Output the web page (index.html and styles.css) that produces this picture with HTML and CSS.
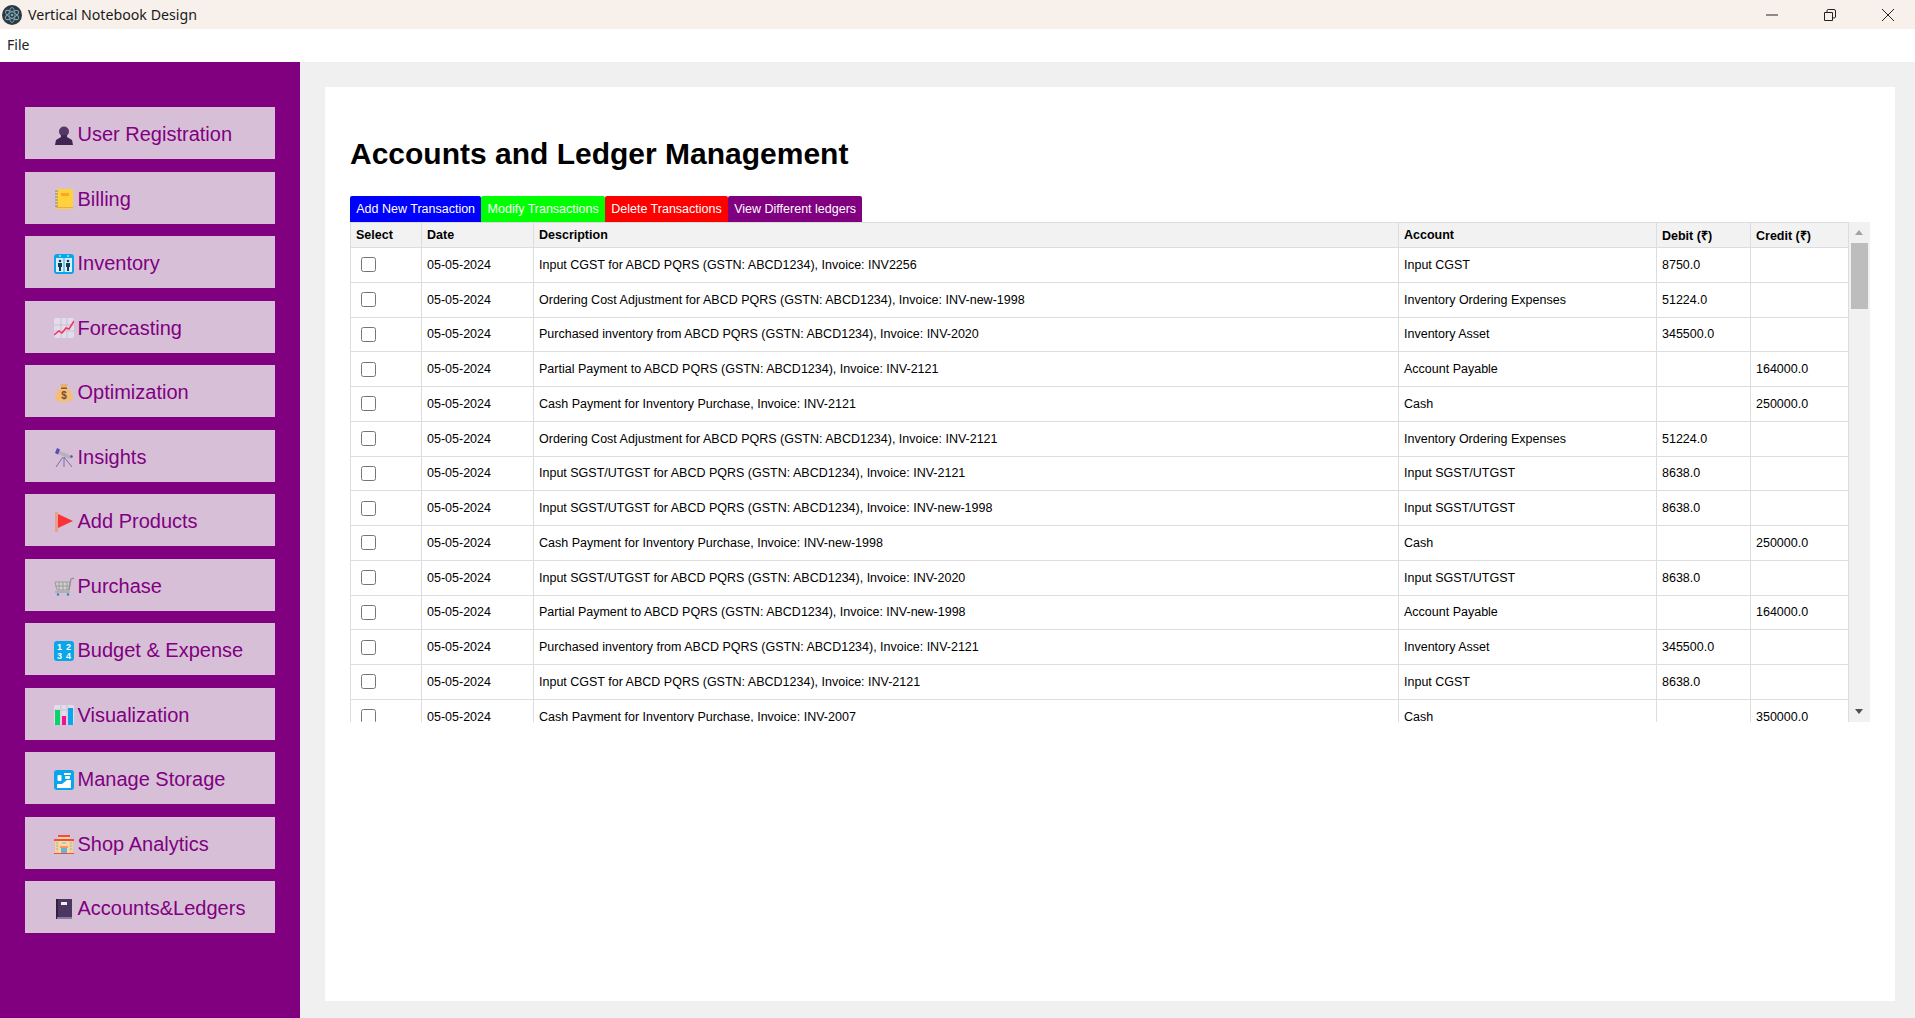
FILE: index.html
```html
<!DOCTYPE html>
<html lang="en">
<head>
  <meta charset="UTF-8" />
  <title>Vertical Notebook Design</title>
  <link rel="stylesheet" href="styles.css">
</head>
<body>

  <!-- Window title bar -->
  <div class="titlebar">
    <div class="titlebar-left">
      <svg class="app-icon" viewBox="0 0 20 20">
        <circle cx="10" cy="10" r="10" fill="#2b3a42"/>
        <g fill="none" stroke="#7fa8b5" stroke-width="0.900">
          <ellipse cx="10" cy="10" rx="7.5" ry="3" transform="rotate(30 10 10)"/>
          <ellipse cx="10" cy="10" rx="7.5" ry="3" transform="rotate(90 10 10)"/>
          <ellipse cx="10" cy="10" rx="7.5" ry="3" transform="rotate(150 10 10)"/>
        </g>
        <circle cx="10" cy="10" r="1.3" fill="#7fa8b5"/>
      </svg>
      <span>Vertical Notebook Design</span>
    </div>
    <div class="window-controls">
      <svg viewBox="0 0 14 14"><path d="M1 7h12" stroke="#222" fill="none"/></svg>
      <svg viewBox="0 0 14 14"><path d="M1.5 4.500h8v8h-8zM4 4.500V2.800Q4 1.500 5.300 1.500H11Q12.500 1.500 12.500 3V9Q12.500 10 10 10" stroke="#222" fill="none"/></svg>
      <svg viewBox="0 0 14 14"><path d="M1 1l12 12M13 1L1 13" stroke="#222" fill="none"/></svg>
    </div>
  </div>

  <!-- Menu -->
  <div class="menubar">File</div>

  <div class="app">
    <!-- Sidebar -->
    <nav class="sidebar">
      <button class="nav-btn">
        <svg viewBox="0 0 20 20"><circle cx="10" cy="6.500" r="5" fill="#553768"/><path d="M7 10h6v2l5 3 1 5H1l1-5 5-3z" fill="#3f2654"/></svg>
        User Registration
      </button>
      <button class="nav-btn">
        <svg viewBox="0 0 20 20"><rect x="2" y="0" width="17" height="20" fill="#ffd23c"/><rect x="2" y="18" width="17" height="1" fill="#e8a951"/><rect x="7" y="4" width="8" height="3" fill="#f9a825"/><path d="M1 2h3M1 5h3M1 8h3M1 11h3M1 14h3M1 17h3" stroke="#9a9a9a" stroke-width="1.500"/></svg>
        Billing
      </button>
      <button class="nav-btn">
        <svg viewBox="0 0 20 20"><rect width="20" height="20" rx="3" fill="#0ba5ea"/><rect x="2" y="4" width="16" height="14" fill="#d9f0fb"/><path d="M10 4v14" stroke="#0ba5ea"/><g fill="#173a4d"><circle cx="6" cy="7" r="1.300"/><circle cx="14" cy="7" r="1.300"/><path d="M4 9h4v4H7v4H5v-4H4zM12 9h4v4h-1v4h-2v-4h-1z"/></g><path d="M5 2h2M13 2h2" stroke="#fff"/></svg>
        Inventory
      </button>
      <button class="nav-btn">
        <svg viewBox="0 0 20 20"><rect width="20" height="20" rx="2" fill="#e3dcea"/><path d="M7 0v20M13 0v20M0 7h20M0 13h20" stroke="#c9bfd2"/><path d="M0 17l5-4 3 2 4-5 3 1 5-8" fill="none" stroke="#f0325f" stroke-width="1.500"/></svg>
        Forecasting
      </button>
      <button class="nav-btn">
        <svg viewBox="0 0 20 20"><path d="M6 1h8l-2 4h-4z" fill="#e8b26c"/><path d="M7 5h6c4 2 6 6 6 9 0 4-3 5-9 5s-9-1-9-5c0-3 2-7 6-9z" fill="#f3bf78"/><rect x="7" y="4.500" width="6" height="1.500" fill="#8a5a3a"/><text x="10" y="16" class="bag-sign">$</text></svg>
        Optimization
      </button>
      <button class="nav-btn">
        <svg viewBox="0 0 20 20"><path d="M3 3l15 6-2 3L2 6z" fill="#b4b0bc"/><path d="M3 1l3 1.500-2 5L1 6z" fill="#5a4fb0"/><path d="M17 8l2 1-1 2-2-1z" fill="#5a4fb0"/><path d="M9 10L2 20M10 10v10M10 10l8 10" stroke="#7a6ba8" fill="none"/></svg>
        Insights
      </button>
      <button class="nav-btn">
        <svg viewBox="0 0 20 20"><rect x="1" y="0" width="3" height="20" fill="#e8a090"/><path d="M4 2l15 7-15 7z" fill="#fb3138"/></svg>
        Add Products
      </button>
      <button class="nav-btn">
        <svg viewBox="0 0 20 20"><path d="M1 6h15l-1 8H3z" fill="#cfcfcf"/><path d="M1 6h15l-1 8H3zM5 6v8M9 6v8M13 6v8M1 10h15" fill="none" stroke="#9b9b9b"/><path d="M15 14l2-11 3-1" fill="none" stroke="#8d8d8d" stroke-width="1.200"/><path d="M1 16h15" stroke="#b0b0b0" stroke-width="2"/><circle cx="4" cy="18.500" r="1.300" fill="#2b8cc4"/><circle cx="14" cy="18.500" r="1.300" fill="#2b8cc4"/></svg>
        Purchase
      </button>
      <button class="nav-btn">
        <svg viewBox="0 0 20 20"><rect width="20" height="20" rx="3" fill="#0ba5ea"/><text x="5.500" y="8.500" class="key-num">1</text><text x="14.500" y="8.500" class="key-num">2</text><text x="5.500" y="18" class="key-num">3</text><text x="14.500" y="18" class="key-num">4</text></svg>
        Budget &amp; Expense
      </button>
      <button class="nav-btn">
        <svg viewBox="0 0 20 20"><rect width="20" height="20" rx="2" fill="#e3dcea"/><path d="M7 0v20M13 0v20M0 5h20" stroke="#cdc3d6"/><rect x="1" y="5" width="5" height="15" fill="#0bd36b"/><rect x="8" y="11" width="4" height="9" fill="#f0148c"/><rect x="14" y="3" width="5" height="17" fill="#0ba5ea"/></svg>
        Visualization
      </button>
      <button class="nav-btn">
        <svg viewBox="0 0 20 20"><rect width="20" height="20" rx="3" fill="#0ba5ea"/><rect x="3.500" y="5" width="4" height="6" rx="1" fill="#fff"/><rect x="10" y="3" width="7" height="2" fill="#fff"/><rect x="11" y="6" width="5" height="3" rx="1" fill="#fff"/><path d="M3 18v-4h5l5-4h4v8z" fill="#fff"/></svg>
        Manage Storage
      </button>
      <button class="nav-btn">
        <svg viewBox="0 0 20 20"><rect x="1" y="6" width="18" height="14" fill="#fbd08a"/><rect x="5" y="2" width="10" height="18" fill="#fdd99b"/><path d="M0 6h20M4 2h12" stroke="#f24c3d" stroke-width="2"/><path d="M0 20h20" stroke="#f24c3d" stroke-width="2"/><rect x="7" y="14" width="6" height="5" fill="#5fb4e0"/><path d="M6 13h8" stroke="#f24c3d"/><path d="M2 9h2M2 12h2M2 15h2M16 9h2M16 12h2M16 15h2M8 9h4" stroke="#8fc7e0" stroke-width="1.500"/></svg>
        Shop Analytics
      </button>
      <button class="nav-btn">
        <svg viewBox="0 0 20 20"><rect x="2" y="0" width="16" height="18" fill="#4c3760"/><rect x="2" y="0" width="2" height="20" fill="#2f1f40"/><rect x="3" y="18" width="15" height="2" fill="#8c7aa0"/><rect x="7" y="3" width="6" height="3" fill="#eee"/></svg>
        Accounts&amp;Ledgers
      </button>
    </nav>

    <!-- Main content -->
    <main class="main">
      <div class="card">
        <h1>Accounts and Ledger Management</h1>

        <div class="tabs">
          <button class="tab tab-add">Add New Transaction</button>
          <button class="tab tab-modify">Modify Transactions</button>
          <button class="tab tab-delete">Delete Transactions</button>
          <button class="tab tab-view">View Different ledgers</button>
        </div>

        <div class="table-wrap">
          <div class="table-clip">
            <table>
              <thead>
                <tr>
                  <th class="col-select">Select</th>
                  <th class="col-date">Date</th>
                  <th class="col-desc">Description</th>
                  <th class="col-account">Account</th>
                  <th class="col-debit">Debit (₹)</th>
                  <th class="col-credit">Credit (₹)</th>
                </tr>
              </thead>
              <tbody>
                <tr><td class="cell-check"><input type="checkbox"></td><td>05-05-2024</td><td>Input CGST for ABCD PQRS (GSTN: ABCD1234), Invoice: INV2256</td><td>Input CGST</td><td>8750.0</td><td></td></tr>
                <tr><td class="cell-check"><input type="checkbox"></td><td>05-05-2024</td><td>Ordering Cost Adjustment for ABCD PQRS (GSTN: ABCD1234), Invoice: INV-new-1998</td><td>Inventory Ordering Expenses</td><td>51224.0</td><td></td></tr>
                <tr><td class="cell-check"><input type="checkbox"></td><td>05-05-2024</td><td>Purchased inventory from ABCD PQRS (GSTN: ABCD1234), Invoice: INV-2020</td><td>Inventory Asset</td><td>345500.0</td><td></td></tr>
                <tr><td class="cell-check"><input type="checkbox"></td><td>05-05-2024</td><td>Partial Payment to ABCD PQRS (GSTN: ABCD1234), Invoice: INV-2121</td><td>Account Payable</td><td></td><td>164000.0</td></tr>
                <tr><td class="cell-check"><input type="checkbox"></td><td>05-05-2024</td><td>Cash Payment for Inventory Purchase, Invoice: INV-2121</td><td>Cash</td><td></td><td>250000.0</td></tr>
                <tr><td class="cell-check"><input type="checkbox"></td><td>05-05-2024</td><td>Ordering Cost Adjustment for ABCD PQRS (GSTN: ABCD1234), Invoice: INV-2121</td><td>Inventory Ordering Expenses</td><td>51224.0</td><td></td></tr>
                <tr><td class="cell-check"><input type="checkbox"></td><td>05-05-2024</td><td>Input SGST/UTGST for ABCD PQRS (GSTN: ABCD1234), Invoice: INV-2121</td><td>Input SGST/UTGST</td><td>8638.0</td><td></td></tr>
                <tr><td class="cell-check"><input type="checkbox"></td><td>05-05-2024</td><td>Input SGST/UTGST for ABCD PQRS (GSTN: ABCD1234), Invoice: INV-new-1998</td><td>Input SGST/UTGST</td><td>8638.0</td><td></td></tr>
                <tr><td class="cell-check"><input type="checkbox"></td><td>05-05-2024</td><td>Cash Payment for Inventory Purchase, Invoice: INV-new-1998</td><td>Cash</td><td></td><td>250000.0</td></tr>
                <tr><td class="cell-check"><input type="checkbox"></td><td>05-05-2024</td><td>Input SGST/UTGST for ABCD PQRS (GSTN: ABCD1234), Invoice: INV-2020</td><td>Input SGST/UTGST</td><td>8638.0</td><td></td></tr>
                <tr><td class="cell-check"><input type="checkbox"></td><td>05-05-2024</td><td>Partial Payment to ABCD PQRS (GSTN: ABCD1234), Invoice: INV-new-1998</td><td>Account Payable</td><td></td><td>164000.0</td></tr>
                <tr><td class="cell-check"><input type="checkbox"></td><td>05-05-2024</td><td>Purchased inventory from ABCD PQRS (GSTN: ABCD1234), Invoice: INV-2121</td><td>Inventory Asset</td><td>345500.0</td><td></td></tr>
                <tr><td class="cell-check"><input type="checkbox"></td><td>05-05-2024</td><td>Input CGST for ABCD PQRS (GSTN: ABCD1234), Invoice: INV-2121</td><td>Input CGST</td><td>8638.0</td><td></td></tr>
                <tr><td class="cell-check"><input type="checkbox"></td><td>05-05-2024</td><td>Cash Payment for Inventory Purchase, Invoice: INV-2007</td><td>Cash</td><td></td><td>350000.0</td></tr>
              </tbody>
            </table>
          </div>
          <div class="scrollbar">
            <div class="arrow arrow-up"></div>
            <div class="track"><div class="thumb"></div></div>
            <div class="arrow arrow-down"></div>
          </div>
        </div>
      </div>
    </main>
  </div>

</body>
</html>
```

FILE: styles.css
```css
* {
  box-sizing: border-box;
  margin: 0;
  padding: 0;
}

html, body {
  height: 100%;
  overflow: hidden;
}

body {
  display: flex;
  flex-direction: column;
  font-family: 'Liberation Sans', Arial, sans-serif;
  background: #f0f0f0;
}

/* Title bar */
.titlebar {
  height: 29px;
  flex: none;
  background: #f8f0ea;
  display: flex;
  justify-content: space-between;
  align-items: center;
  padding: 0 20px 0 2px;
  font-family: 'Noto Sans', sans-serif;
  font-size: 14.2px;
  color: #1a1a1a;
}

.titlebar-left {
  display: flex;
  align-items: center;
  gap: 6px;
}

.app-icon {
  width: 20px;
  height: 20px;
}

.window-controls {
  display: flex;
  gap: 44px;
}

.window-controls svg {
  width: 14px;
  height: 14px;
  display: block;
}

.menubar {
  height: 33px;
  flex: none;
  background: #fff;
  padding: 6px 7px 0;
  font-family: 'Noto Sans', sans-serif;
  font-size: 14px;
  color: #222;
}

.app {
  flex: 1;
  display: flex;
  min-height: 0;
}

/* Sidebar */
.sidebar {
  width: 300px;
  flex: none;
  background: #800080;
  padding: 45px 25px 0;
  display: flex;
  flex-direction: column;
  gap: 12.5px;
}

.nav-btn {
  height: 52px;
  flex: none;
  background: #d8bfd8;
  color: #800080;
  border: none;
  display: flex;
  align-items: center;
  gap: 3.5px;
  padding: 3px 0 0 29px;
  font-family: inherit;
  font-size: 20px;
  text-align: left;
}

.nav-btn svg {
  width: 20px;
  height: 20px;
  flex: none;
}

.bag-sign {
  font-size: 10px;
  font-weight: 700;
  fill: #7a4a2a;
  text-anchor: middle;
}

.key-num {
  font-size: 9px;
  font-weight: 700;
  fill: #fff;
  text-anchor: middle;
}

/* Content */
.main {
  flex: 1;
  padding: 25px 20px 17px 25px;
  min-width: 0;
}

.card {
  height: 100%;
  background: #fff;
  padding: 0 25px;
}

.card h1 {
  font-size: 30px;
  font-weight: 700;
  color: #000;
  padding-top: 48px;
  line-height: 37px;
  margin-bottom: 24px;
}

.tabs {
  display: flex;
}

.tab {
  height: 26px;
  border: none;
  border-radius: 2px 2px 0 0;
  padding: 0 6.25px;
  color: #fff;
  font-family: inherit;
  font-size: 12.5px;
}

.tab-add { background: #0000ff; }
.tab-modify { background: #00ff00; }
.tab-delete { background: #ff0000; }
.tab-view { background: #800080; }

.table-wrap {
  display: flex;
  height: 500px;
}

.table-clip {
  flex: 1;
  min-width: 0;
  overflow: hidden;
}

table {
  width: 100%;
  table-layout: fixed;
  border-collapse: collapse;
  font-size: 12.5px;
  color: #000;
}

th, td {
  border: 1px solid #ddd;
  padding: 0 5px;
  text-align: left;
  white-space: nowrap;
}

th {
  height: 25px;
  background: #f2f2f2;
  font-weight: 700;
}

td {
  height: 34.75px;
}

.col-select { width: 71px; }
.col-date { width: 112px; }
.col-account { width: 258px; }
.col-debit { width: 94px; }
.col-credit { width: 98px; }

.cell-check {
  padding-left: 10px;
}

.cell-check input {
  width: 15px;
  height: 15px;
  display: block;
}

/* Scrollbar next to the table */
.scrollbar {
  width: 21px;
  flex: none;
  background: #f1f1f1;
  display: flex;
  flex-direction: column;
  padding: 0 2px;
}

.arrow {
  height: 21px;
  flex: none;
  position: relative;
}

.arrow::after {
  content: "";
  position: absolute;
  left: 4px;
  top: 8px;
  border-left: 4.500px solid transparent;
  border-right: 4.500px solid transparent;
}

.arrow-up::after { border-bottom: 5px solid #a3a3a3; }
.arrow-down::after { border-top: 5px solid #505050; }

.track {
  flex: 1;
}

.thumb {
  height: 66px;
  background: #bdbdbd;
}
```
